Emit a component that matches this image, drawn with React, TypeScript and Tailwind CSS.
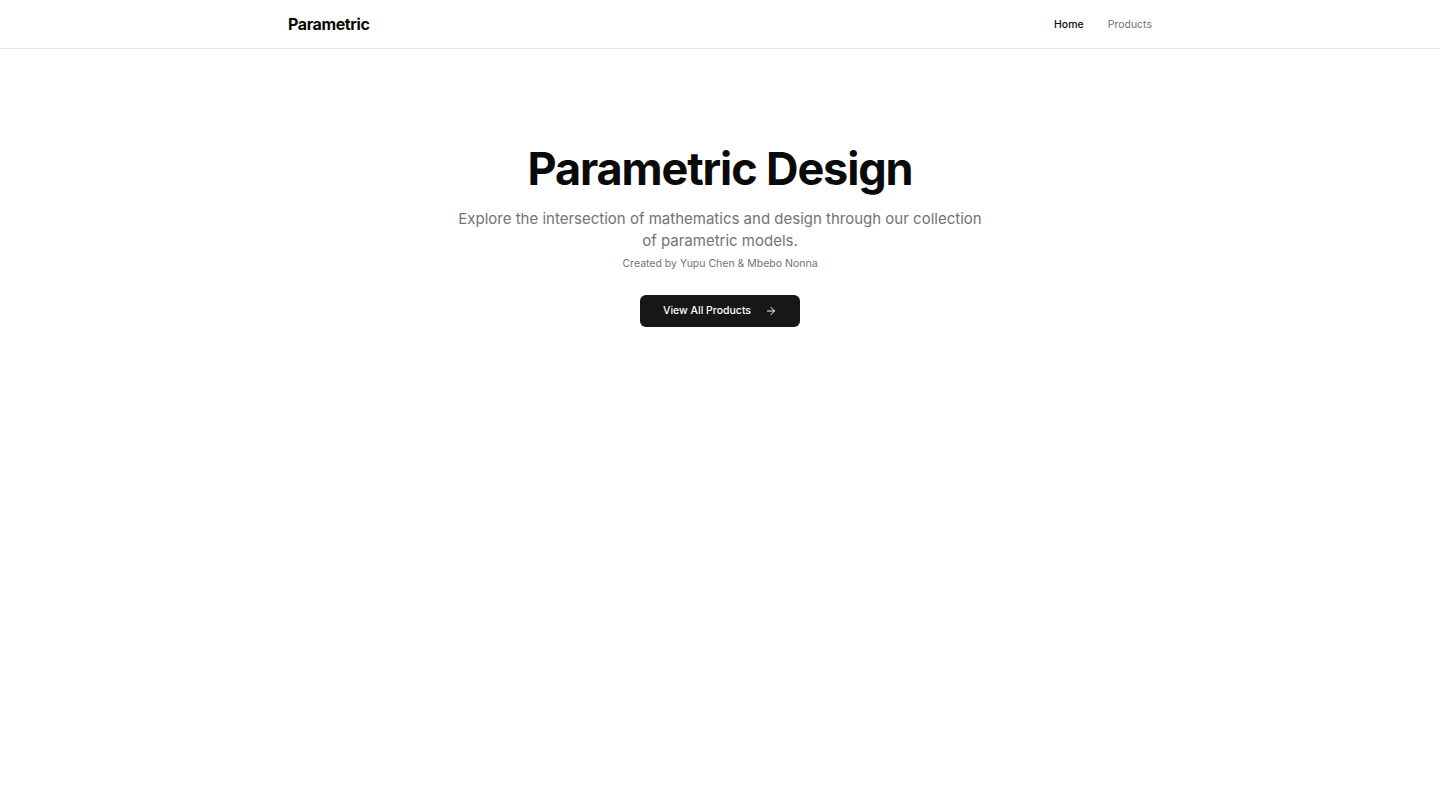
import { ArrowRight } from "lucide-react";

export default function App() {
  return (
    <div className="min-h-screen bg-white text-[#0a0a0a] font-['Inter',sans-serif]">
      <header className="border-b border-[#e5e5e5]">
        <div className="max-w-4xl mx-auto px-4 h-12 flex items-center justify-between">
          <span className="text-base font-bold tracking-tight">Parametric</span>
          <nav className="flex items-center gap-6 pt-0.5 text-[10.5px]">
            <a className="font-medium text-[#0a0a0a]">Home</a>
            <a className="text-[#737373]">Products</a>
          </nav>
        </div>
      </header>

      <main className="max-w-4xl mx-auto px-4 pt-[94px] flex flex-col items-center text-center">
        <h1 className="text-[45px] font-bold tracking-tight leading-[52px]">Parametric Design</h1>
        <p className="mt-[13px] max-w-[530px] text-[15px] leading-[22px] text-[#737373]">
          Explore the intersection of mathematics and design through our collection of parametric models.
        </p>
        <p className="mt-1 text-[10.5px] text-[#737373]">Created by Yupu Chen &amp; Mbebo Nonna</p>
        <button className="mt-[23px] h-8 w-40 rounded-md bg-[#171717] text-white text-[10.5px] font-medium flex items-center justify-center gap-[14px]">
          View All Products
          <ArrowRight className="w-3 h-3" />
        </button>
      </main>
    </div>
  );
}
